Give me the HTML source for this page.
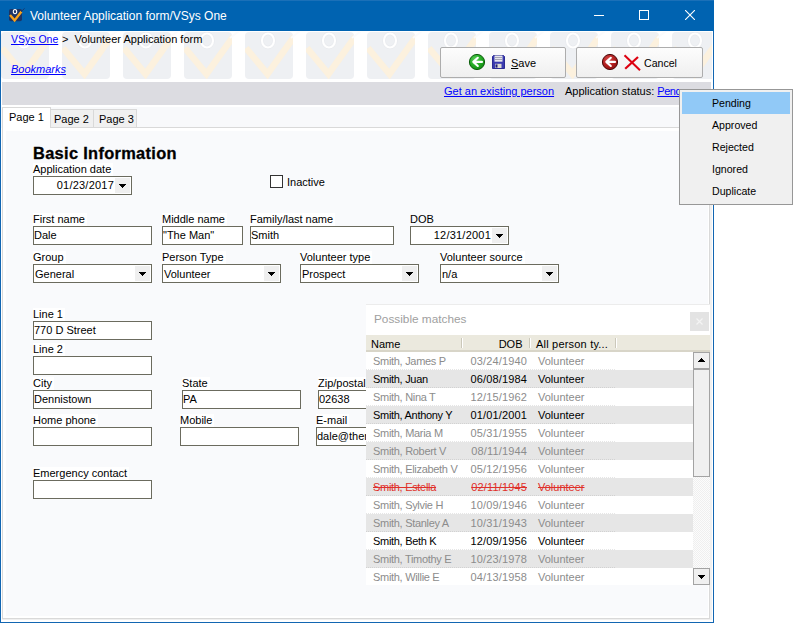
<!DOCTYPE html>
<html><head><meta charset="utf-8">
<style>
*{margin:0;padding:0;box-sizing:border-box}
html,body{width:793px;height:623px;overflow:hidden;background:#fff;font-family:"Liberation Sans",sans-serif;font-size:11px;color:#000}
.a{position:absolute}
.t{position:absolute;white-space:nowrap;line-height:13px;font-size:11px}
#win{position:absolute;left:0;top:0;width:714px;height:623px;background:#fff;overflow:hidden}
#title{position:absolute;left:0;top:0;width:714px;height:31px;background:#0063b1;box-shadow:inset 0 1px 0 #1b70b8}
.lbl{position:absolute;white-space:nowrap;line-height:13px;height:13px;font-size:11px;background:#fff;padding-right:2px}
.box{position:absolute;height:19px;background:#fff;border:1px solid #6b6b5e}
.box span{position:absolute;left:0px;top:2px;line-height:13px;white-space:nowrap}
.dd{position:absolute;right:1px;top:1px;width:15px;height:15px;background:#efefef}
.dd:after{content:"";position:absolute;left:4px;top:6px;width:7px;height:4px;background:linear-gradient(#000,#000) 0 0/7px 1px no-repeat,linear-gradient(#000,#000) 1px 1px/5px 1px no-repeat,linear-gradient(#000,#000) 2px 2px/3px 1px no-repeat,linear-gradient(#000,#000) 3px 3px/1px 1px no-repeat}
.tile{position:absolute;top:1px;width:48px;height:47px;border-radius:6px;background:#f1f2f5}
.row{position:absolute;left:0;width:327px;height:18px}
.row span{position:absolute;top:3px;line-height:13px;white-space:nowrap}
</style></head><body>
<div id="win">
  <div id="title">
    <svg class="a" style="left:0;top:0" width="30" height="30" viewBox="0 0 30 30">
      <rect x="9" y="9" width="13" height="12.2" rx="2" fill="#1c3466"/>
      <path d="M10 15 L14.6 20.4 L21.5 11.5" stroke="#f7a21b" stroke-width="2.4" fill="none"/>
      <path d="M21 11.8 L24.6 8.4" stroke="#1c3466" stroke-width="0.9" fill="none"/>
      <ellipse cx="15" cy="11.6" rx="1.7" ry="2.1" stroke="#fff" stroke-width="1.1" fill="none"/>
    </svg>
    <div class="t" style="left:30px;top:9px;font-size:12px;color:#fff;line-height:15px">Volunteer Application form/VSys One</div>
    <div class="a" style="left:594px;top:15px;width:10px;height:1px;background:#fff"></div>
    <div class="a" style="left:639px;top:10px;width:10px;height:10px;border:1px solid #fff"></div>
    <svg class="a" style="left:685px;top:10px" width="10" height="10" viewBox="0 0 10 10"><path d="M0 0L10 10M10 0L0 10" stroke="#fff" stroke-width="1.1"/></svg>
  </div>

  <!-- header -->
  <div class="a" id="hdr" style="left:0;top:31px;width:712px;height:51px;background:#fff;overflow:hidden"><svg class="a" style="left:0;top:0" width="712" height="51"><defs><pattern id="tp" x="1" y="1" width="61" height="51" patternUnits="userSpaceOnUse">
<clipPath id="tc"><rect x="0" y="0" width="48" height="47" rx="4"/></clipPath>
<rect x="0" y="0" width="48" height="47" rx="4" fill="#eef0f3"/>
<path d="M1 16 L22.5 42 L49 5" stroke="#fcf1de" stroke-width="6.6" fill="none" clip-path="url(#tc)"/>
<path d="M46 6 L55 -1" stroke="#fbfbfc" stroke-width="2" fill="none"/>
<ellipse cx="23" cy="8.5" rx="6" ry="7" stroke="#e8eaee" stroke-width="3.4" fill="none"/>
<ellipse cx="23" cy="8.5" rx="6" ry="7" stroke="#ffffff" stroke-width="2.2" fill="none"/>
</pattern></defs><rect x="0" y="0" width="712" height="51" fill="url(#tp)"/></svg>
  </div>
  <div class="t" style="left:11px;top:33px;color:#0000ff;text-decoration:underline;font-size:10.5px">VSys One</div>
  <div class="t" style="left:62px;top:33px">&gt;&nbsp; Volunteer Application form</div>
  <div class="t" style="left:11px;top:63px;color:#0000ff;text-decoration:underline;font-style:italic">Bookmarks</div>

  <!-- buttons -->
  <div class="a btn" style="left:440px;top:47px;width:126px;height:31px;border:1px solid #adadad;border-radius:2px;background:linear-gradient(#fdfdfd,#efefef)"></div>
  <div class="a btn" style="left:576px;top:47px;width:127px;height:31px;border:1px solid #adadad;border-radius:2px;background:linear-gradient(#fdfdfd,#efefef)"></div>
  <div class="t" style="left:511px;top:56px;font-size:11px;line-height:15px"><u>S</u>ave</div>
  <div class="t" style="left:644px;top:56px;font-size:10.6px;line-height:15px">Cancel</div>


  <svg class="a" style="left:468px;top:53px" width="18" height="18" viewBox="0 0 18 18">
    <defs><radialGradient id="gg" cx="0.4" cy="0.35" r="0.7"><stop offset="0" stop-color="#5fd35f"/><stop offset="0.6" stop-color="#22a822"/><stop offset="1" stop-color="#138a13"/></radialGradient></defs>
    <circle cx="9" cy="9" r="7.6" fill="url(#gg)" stroke="#0b5d0b" stroke-width="1"/>
    <path d="M14 8.9H6.5M9.8 4.8L5.3 8.9L9.8 13" stroke="#fff" stroke-width="2.1" fill="none" stroke-linecap="round" stroke-linejoin="round"/>
  </svg>
  <svg class="a" style="left:492px;top:55px" width="13" height="14" viewBox="0 0 13 14">
    <path d="M0.5 1.5L1.5 0.5H11.5L12.5 1.5V13.5H0.5Z" fill="#3a3ab0" stroke="#2a2a92" stroke-width="1"/>
    <rect x="2.5" y="0.5" width="8" height="6.2" fill="#e6e6ee"/>
    <rect x="3" y="2" width="7" height="0.9" fill="#9c9cab"/>
    <rect x="3" y="4" width="7" height="0.9" fill="#9c9cab"/>
    <rect x="3" y="8.8" width="6.5" height="4.2" fill="#dcdad2"/>
    <rect x="3.5" y="9.4" width="2" height="3.2" fill="#1c1c78"/>
  </svg>
  <svg class="a" style="left:601px;top:53px" width="18" height="18" viewBox="0 0 18 18">
    <defs><radialGradient id="rg" cx="0.4" cy="0.35" r="0.7"><stop offset="0" stop-color="#d95050"/><stop offset="0.6" stop-color="#b01e1e"/><stop offset="1" stop-color="#8c1010"/></radialGradient></defs>
    <circle cx="9" cy="9" r="7.6" fill="url(#rg)" stroke="#4a0808" stroke-width="1"/>
    <path d="M14 8.9H6.5M9.8 4.8L5.3 8.9L9.8 13" stroke="#fff" stroke-width="2.1" fill="none" stroke-linecap="round" stroke-linejoin="round"/>
  </svg>
  <svg class="a" style="left:623px;top:54px" width="18" height="17" viewBox="0 0 18 17">
    <path d="M1.5 1.2L17 16.2" stroke="#dd0010" stroke-width="2"/>
    <path d="M15 3L2.2 14.8" stroke="#dd0010" stroke-width="2.2"/>
  </svg>
  <!-- gray bar -->
  <div class="a" style="left:2px;top:82px;width:709px;height:23px;background:#dcdce1"></div>
  <div class="t" style="left:444px;top:85px;color:#0000ff;text-decoration:underline">Get an existing person</div>
  <div class="a" style="left:560px;top:82px;width:119px;height:20px;overflow:hidden"><div class="t" style="left:5px;top:3px">Application status: <span style="color:#0000ff;text-decoration:underline;letter-spacing:-0.5px">Pending</span></div></div>

  <!-- tabs -->
  <div class="a" style="left:1px;top:105px;width:711px;height:23px;background:#f8f9fb;border-top:2px solid #fff"></div>
  <div class="a" style="left:50px;top:109px;width:44px;height:19px;background:#f0f0f0;border:1px solid #d9d9d9"></div>
  <div class="a" style="left:93px;top:109px;width:44px;height:19px;background:#f0f0f0;border:1px solid #d9d9d9"></div>
  <div class="a" style="left:2px;top:127px;width:708px;height:492px;border:1px solid #d9d9d9;background:#fff"></div>
  <div class="a" style="left:2px;top:107px;width:49px;height:21px;background:#fff;border:1px solid #d9d9d9;border-bottom:0"></div><div class="a" style="left:3px;top:127px;width:47px;height:4px;background:#fff"></div>
  <div class="a" style="left:6px;top:131px;width:702px;height:485px;background:#f9fafc"></div>
  <div class="t" style="left:9px;top:111px">Page 1</div>
  <div class="t" style="left:54px;top:113px">Page 2</div>
  <div class="t" style="left:99px;top:113px">Page 3</div>

  <!-- form -->
  <div class="t" style="left:33px;top:143px;font-weight:bold;font-size:16.4px;letter-spacing:0.32px;line-height:20px;-webkit-text-stroke:0.3px #000">Basic Information</div>
  <div class="lbl" style="left:33px;top:163px">Application date</div>
  <div class="box" style="left:33px;top:176px;width:99px"><span style="left:auto;right:17px;letter-spacing:0.22px">01/23/2017</span><div class="dd"></div></div>
  <div class="a" style="left:270px;top:175px;width:13px;height:13px;border:1px solid #333;background:#fff"></div>
  <div class="t" style="left:287px;top:176px">Inactive</div>

  <div class="lbl" style="left:33px;top:213px">First name</div>
  <div class="box" style="left:33px;top:226px;width:119px"><span>Dale</span></div>
  <div class="lbl" style="left:162px;top:213px">Middle name</div>
  <div class="box" style="left:162px;top:226px;width:81px"><span>"The Man"</span></div>
  <div class="lbl" style="left:250px;top:213px">Family/last name</div>
  <div class="box" style="left:250px;top:226px;width:144px"><span>Smith</span></div>
  <div class="lbl" style="left:410px;top:213px;background:none">DOB</div>
  <div class="box" style="left:410px;top:226px;width:99px"><span style="left:auto;right:17px;letter-spacing:0.22px">12/31/2001</span><div class="dd"></div></div>

  <div class="lbl" style="left:33px;top:251px">Group</div>
  <div class="box" style="left:33px;top:264px;width:119px"><span style="left:1px;top:3px">General</span><div class="dd"></div></div>
  <div class="lbl" style="left:162px;top:251px">Person Type</div>
  <div class="box" style="left:162px;top:264px;width:119px"><span style="left:1px;top:3px">Volunteer</span><div class="dd"></div></div>
  <div class="lbl" style="left:300px;top:251px">Volunteer type</div>
  <div class="box" style="left:300px;top:264px;width:119px"><span style="left:1px;top:3px">Prospect</span><div class="dd"></div></div>
  <div class="lbl" style="left:440px;top:251px">Volunteer source</div>
  <div class="box" style="left:440px;top:264px;width:119px"><span style="left:1px;top:3px">n/a</span><div class="dd"></div></div>

  <div class="lbl" style="left:33px;top:308px">Line 1</div>
  <div class="box" style="left:33px;top:321px;width:119px"><span>770 D Street</span></div>
  <div class="lbl" style="left:33px;top:343px">Line 2</div>
  <div class="box" style="left:33px;top:356px;width:119px"></div>
  <div class="lbl" style="left:33px;top:377px">City</div>
  <div class="box" style="left:33px;top:390px;width:119px"><span>Dennistown</span></div>
  <div class="lbl" style="left:182px;top:377px">State</div>
  <div class="box" style="left:182px;top:390px;width:119px"><span>PA</span></div>
  <div class="lbl" style="left:318px;top:377px">Zip/postal</div>
  <div class="box" style="left:318px;top:390px;width:119px"><span>02638</span></div>
  <div class="lbl" style="left:33px;top:414px">Home phone</div>
  <div class="box" style="left:33px;top:427px;width:119px"></div>
  <div class="lbl" style="left:180px;top:414px">Mobile</div>
  <div class="box" style="left:180px;top:427px;width:119px"></div>
  <div class="lbl" style="left:316px;top:414px">E-mail</div>
  <div class="box" style="left:316px;top:427px;width:119px"><span>dale@themanmail.com</span></div>
  <div class="lbl" style="left:33px;top:467px">Emergency contact</div>
  <div class="box" style="left:33px;top:480px;width:119px"></div>

  <div class="a" style="left:710px;top:105px;width:2px;height:514px;background:#f0f0f0"></div>
  <!-- possible matches -->
  <div class="a" id="pm" style="left:366px;top:304px;width:344px;height:281px;background:#fff;border-top:1px solid #ececec;overflow:hidden">
    <div class="t" style="left:8px;top:7px;font-size:11.8px;line-height:15px;color:#a0a0a0">Possible matches</div>
    <div class="a" style="left:324px;top:7px;width:19px;height:19px;background:#e3e3e3"><svg class="a" style="left:6px;top:6px" width="7" height="7" viewBox="0 0 7 7"><path d="M0.5 0.5L6.5 6.5M6.5 0.5L0.5 6.5" stroke="#f4f4f4" stroke-width="1.2"/></svg></div>
    <div class="a" style="left:0;top:30px;width:344px;height:17px;background:#ebe9de;border-bottom:2px solid #d8d5c8"></div>
    <div class="t" style="left:5px;top:33px">Name</div>
    <div class="t" style="left:95.5px;top:33px;width:61px;text-align:right">DOB</div>
    <div class="t" style="left:170px;top:33px;letter-spacing:0.2px">All person ty...</div>
    <div class="a" style="left:95px;top:33px;width:2px;height:10px;background:linear-gradient(90deg,#cbc8ba 50%,#fff 50%)"></div>
    <div class="a" style="left:163px;top:33px;width:2px;height:10px;background:linear-gradient(90deg,#cbc8ba 50%,#fff 50%)"></div>
    <div class="a" style="left:249px;top:33px;width:2px;height:10px;background:linear-gradient(90deg,#cbc8ba 50%,#fff 50%)"></div>
    <div class="a" id="rows" style="left:0;top:47px;width:327px;height:234px">
<div class="row" style="top:0px;background:repeating-linear-gradient(90deg,#e6e6e6 0 1px,transparent 1px 2px) 0 100%/249px 1px no-repeat,#fff;color:#8c8c8c;"><span style="left:7px;letter-spacing:-0.3px;">Smith, James P</span><span style="left:101px;width:60px;text-align:right;letter-spacing:0.15px;">03/24/1940</span><span style="left:172px;">Volunteer</span></div>
<div class="row" style="top:18px;background:repeating-linear-gradient(90deg,#d2d2d2 0 1px,transparent 1px 2px) 0 100%/249px 1px no-repeat,#e6e6e6;color:#000;"><span style="left:7px;letter-spacing:-0.3px;">Smith, Juan</span><span style="left:101px;width:60px;text-align:right;letter-spacing:0.15px;">06/08/1984</span><span style="left:172px;">Volunteer</span></div>
<div class="row" style="top:36px;background:repeating-linear-gradient(90deg,#e6e6e6 0 1px,transparent 1px 2px) 0 100%/249px 1px no-repeat,#fff;color:#8c8c8c;"><span style="left:7px;letter-spacing:-0.3px;">Smith, Nina T</span><span style="left:101px;width:60px;text-align:right;letter-spacing:0.15px;">12/15/1962</span><span style="left:172px;">Volunteer</span></div>
<div class="row" style="top:54px;background:repeating-linear-gradient(90deg,#d2d2d2 0 1px,transparent 1px 2px) 0 100%/249px 1px no-repeat,#e6e6e6;color:#000;"><span style="left:7px;letter-spacing:-0.3px;">Smith, Anthony Y</span><span style="left:101px;width:60px;text-align:right;letter-spacing:0.15px;">01/01/2001</span><span style="left:172px;">Volunteer</span></div>
<div class="row" style="top:72px;background:repeating-linear-gradient(90deg,#e6e6e6 0 1px,transparent 1px 2px) 0 100%/249px 1px no-repeat,#fff;color:#8c8c8c;"><span style="left:7px;letter-spacing:-0.3px;">Smith, Maria M</span><span style="left:101px;width:60px;text-align:right;letter-spacing:0.15px;">05/31/1955</span><span style="left:172px;">Volunteer</span></div>
<div class="row" style="top:90px;background:repeating-linear-gradient(90deg,#d2d2d2 0 1px,transparent 1px 2px) 0 100%/249px 1px no-repeat,#e6e6e6;color:#8c8c8c;"><span style="left:7px;letter-spacing:-0.3px;">Smith, Robert V</span><span style="left:101px;width:60px;text-align:right;letter-spacing:0.15px;">08/11/1944</span><span style="left:172px;">Volunteer</span></div>
<div class="row" style="top:108px;background:repeating-linear-gradient(90deg,#e6e6e6 0 1px,transparent 1px 2px) 0 100%/249px 1px no-repeat,#fff;color:#8c8c8c;"><span style="left:7px;letter-spacing:-0.3px;">Smith, Elizabeth V</span><span style="left:101px;width:60px;text-align:right;letter-spacing:0.15px;">05/12/1956</span><span style="left:172px;">Volunteer</span></div>
<div class="row" style="top:126px;background:repeating-linear-gradient(90deg,#d2d2d2 0 1px,transparent 1px 2px) 0 100%/249px 1px no-repeat,#e6e6e6;color:#e0302a;text-decoration:line-through;"><span style="left:7px;letter-spacing:-0.3px;text-decoration:line-through;">Smith, Estella</span><span style="left:101px;width:60px;text-align:right;letter-spacing:0.15px;text-decoration:line-through;">02/11/1945</span><span style="left:172px;text-decoration:line-through;">Volunteer</span></div>
<div class="row" style="top:144px;background:repeating-linear-gradient(90deg,#e6e6e6 0 1px,transparent 1px 2px) 0 100%/249px 1px no-repeat,#fff;color:#8c8c8c;"><span style="left:7px;letter-spacing:-0.3px;">Smith, Sylvie H</span><span style="left:101px;width:60px;text-align:right;letter-spacing:0.15px;">10/09/1946</span><span style="left:172px;">Volunteer</span></div>
<div class="row" style="top:162px;background:repeating-linear-gradient(90deg,#d2d2d2 0 1px,transparent 1px 2px) 0 100%/249px 1px no-repeat,#e6e6e6;color:#8c8c8c;"><span style="left:7px;letter-spacing:-0.3px;">Smith, Stanley A</span><span style="left:101px;width:60px;text-align:right;letter-spacing:0.15px;">10/31/1943</span><span style="left:172px;">Volunteer</span></div>
<div class="row" style="top:180px;background:repeating-linear-gradient(90deg,#e6e6e6 0 1px,transparent 1px 2px) 0 100%/249px 1px no-repeat,#fff;color:#000;"><span style="left:7px;letter-spacing:-0.3px;">Smith, Beth K</span><span style="left:101px;width:60px;text-align:right;letter-spacing:0.15px;">12/09/1956</span><span style="left:172px;">Volunteer</span></div>
<div class="row" style="top:198px;background:repeating-linear-gradient(90deg,#d2d2d2 0 1px,transparent 1px 2px) 0 100%/249px 1px no-repeat,#e6e6e6;color:#8c8c8c;"><span style="left:7px;letter-spacing:-0.3px;">Smith, Timothy E</span><span style="left:101px;width:60px;text-align:right;letter-spacing:0.15px;">10/23/1978</span><span style="left:172px;">Volunteer</span></div>
<div class="row" style="top:216px;background:repeating-linear-gradient(90deg,#e6e6e6 0 1px,transparent 1px 2px) 0 100%/249px 1px no-repeat,#fff;color:#8c8c8c;"><span style="left:7px;letter-spacing:-0.3px;">Smith, Willie E</span><span style="left:101px;width:60px;text-align:right;letter-spacing:0.15px;">04/13/1958</span><span style="left:172px;">Volunteer</span></div>
</div>
    <div class="a" style="left:327px;top:47px;width:17px;height:233px;background:repeating-conic-gradient(#efefef 0 25%,#fcfcfc 0 50%) 0 0/2px 2px"></div>
    <div class="a" style="left:327px;top:47px;width:17px;height:17px;background:#f0f0f0;border:1px solid #a3a3a3"><div class="a" style="left:4px;top:5px;width:7px;height:4px;background:linear-gradient(#000,#000) 0 3px/7px 1px no-repeat,linear-gradient(#000,#000) 1px 2px/5px 1px no-repeat,linear-gradient(#000,#000) 2px 1px/3px 1px no-repeat,linear-gradient(#000,#000) 3px 0/1px 1px no-repeat"></div></div>
    <div class="a" style="left:327px;top:64px;width:17px;height:108px;background:#f0f0f0;border:1px solid #a3a3a3"></div>
    <div class="a" style="left:327px;top:263px;width:17px;height:17px;background:#f0f0f0;border:1px solid #a3a3a3"><div class="a" style="left:4px;top:6px;width:7px;height:4px;background:linear-gradient(#000,#000) 0 0/7px 1px no-repeat,linear-gradient(#000,#000) 1px 1px/5px 1px no-repeat,linear-gradient(#000,#000) 2px 2px/3px 1px no-repeat,linear-gradient(#000,#000) 3px 3px/1px 1px no-repeat"></div></div>
  </div>
  <div class="a" style="left:0;top:31px;width:1px;height:592px;background:#1266b2"></div>
  <div class="a" style="left:713px;top:31px;width:1px;height:592px;background:#1266b2"></div>
  <div class="a" style="left:0;top:622px;width:714px;height:1px;background:#1266b2"></div><div class="a" style="left:2px;top:619px;width:710px;height:1px;background:#f0f0f0"></div>
</div>

  <!-- dropdown menu -->
  <div class="a" style="left:679px;top:89px;width:114px;height:116px;background:#f0f0f0;border:1px solid #979797">
    <div class="a" style="left:2px;top:2px;width:108px;height:22px;background:#91c9f7"></div>
    <div class="t" style="left:32px;top:6px;font-size:10.6px;line-height:15px">Pending</div>
    <div class="t" style="left:32px;top:28px;font-size:10.6px;line-height:15px">Approved</div>
    <div class="t" style="left:32px;top:50px;font-size:10.6px;line-height:15px">Rejected</div>
    <div class="t" style="left:32px;top:72px;font-size:10.6px;line-height:15px">Ignored</div>
    <div class="t" style="left:32px;top:94px;font-size:10.6px;line-height:15px">Duplicate</div>
  </div>
</body></html>
